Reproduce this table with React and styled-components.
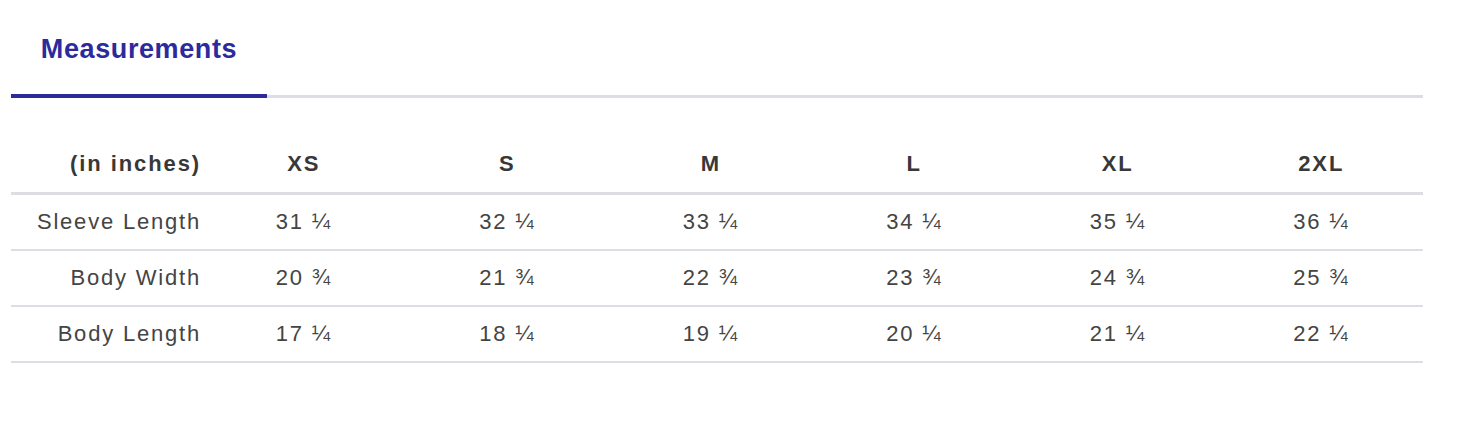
import React from "react";
import styled, { createGlobalStyle } from "styled-components";

const GlobalStyle = createGlobalStyle`
    body {
        margin: 0;
        background: #fff;
        font-family: "Liberation Sans", Arial, sans-serif;
    }
`;

const Page = styled.div`
    width: 1412px;
    margin-left: 11px;
`;

const TabBar = styled.div`
    display: flex;
    border-bottom: 3px solid #dddde3;
`;

const Tab = styled.div`
    width: 256px;
    height: 98px;
    box-sizing: border-box;
    display: flex;
    align-items: center;
    justify-content: center;
    padding-top: 4px;
    font-size: 27px;
    font-weight: bold;
    letter-spacing: 0.6px;
    color: #2b2b9c;
    border-bottom: 4px solid ${props => (props.active ? "#2b2b9c" : "transparent")};
    margin-bottom: -3px;
`;

const Table = styled.div`
    margin-top: 38px;
    display: grid;
    grid-template-columns: 191px repeat(6, 1fr);
`;

const Cell = styled.div`
    height: ${props => (props.head ? "56px" : "54px")};
    display: flex;
    align-items: center;
    justify-content: ${props => (props.label ? "flex-end" : "center")};
    padding-right: ${props => (props.label ? "1px" : "0")};
    font-size: 22px;
    letter-spacing: ${props => (props.head ? "1.9px" : "1.8px")};
    font-weight: ${props => (props.head ? "bold" : "normal")};
    color: ${props => (props.head ? "#383838" : "#444")};
    border-bottom: ${props => (props.head ? "3px" : "2px")} solid #dddde3;
`;

const sizes = ["XS", "S", "M", "L", "XL", "2XL"];

const rows = [
    { name: "Sleeve Length", values: ["31 ¼", "32 ¼", "33 ¼", "34 ¼", "35 ¼", "36 ¼"] },
    { name: "Body Width", values: ["20 ¾", "21 ¾", "22 ¾", "23 ¾", "24 ¾", "25 ¾"] },
    { name: "Body Length", values: ["17 ¼", "18 ¼", "19 ¼", "20 ¼", "21 ¼", "22 ¼"] },
];

export default () => (
    <>
        <GlobalStyle />
        <Page>
            <TabBar>
                <Tab active>Measurements</Tab>
            </TabBar>
            <Table>
                <Cell head label>(in inches)</Cell>
                {sizes.map(s => (
                    <Cell head key={s}>{s}</Cell>
                ))}
                {rows.map(r => (
                    <React.Fragment key={r.name}>
                        <Cell label>{r.name}</Cell>
                        {r.values.map((v, i) => (
                            <Cell key={i}>{v}</Cell>
                        ))}
                    </React.Fragment>
                ))}
            </Table>
        </Page>
    </>
);
